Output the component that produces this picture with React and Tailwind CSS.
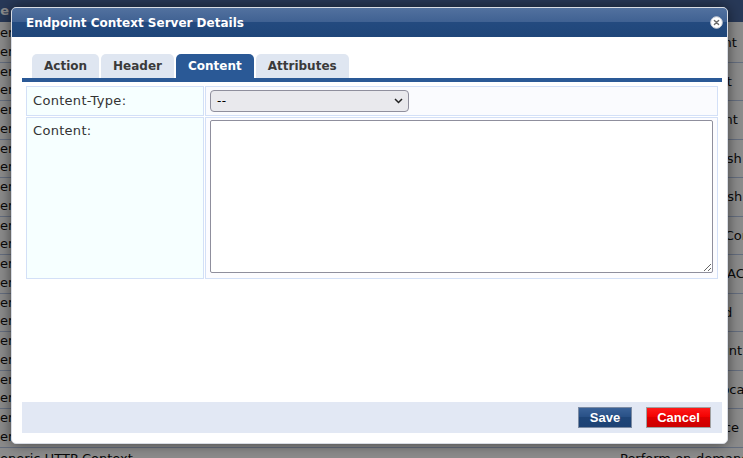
import React from 'react';

const rows = [
  'Disables endpoint',
  'Isolates endpoint',
  'Restores endpoint',
  'Query device hash',
  'Check device hash',
  'Marks endpoint Compliant',
  'Gets endpoint MAC',
  'Endpoint blocked',
  'Retrigger endpoint',
  'Set the device location',
  'Disconnect device',
];

const tabs = ['Action', 'Header', 'Content', 'Attributes'];

const BackgroundPage = () => (
  <div className="absolute inset-0 bg-white text-[13px] text-[#111]">
    <div className="h-[22px] bg-[#4a68a0] flex items-center">
      <span className="-ml-[33px] font-bold text-white">Name</span>
    </div>
    <div className="mt-[2px]">
      {rows.map((r, i) => (
        <div key={i} className="h-[38.5px] flex items-center border-b border-[#b8c8e8]">
          <div className="w-[630px] shrink-0 -ml-[10px] leading-[18.5px]">
            <div>Generic HTTP Context</div>
            <div>Generic HTTP Context Server</div>
          </div>
          <div className="whitespace-nowrap">{r}</div>
        </div>
      ))}
      <div className="h-[38.5px] flex items-start pt-[1px]">
        <div className="w-[630px] shrink-0 -ml-[10px]">Generic HTTP Context</div>
        <div className="whitespace-nowrap">Perform on-demand scan</div>
      </div>
    </div>
    <div className="absolute inset-0 bg-black/45" />
  </div>
);

const CloseIcon = () => (
  <svg width="13" height="13" viewBox="0 0 13 13">
    <circle cx="6.5" cy="6.5" r="5.8" fill="#ffffff" stroke="#c8ccd4" strokeWidth="1" />
    <path d="M4.4 4.4 L8.6 8.6 M8.6 4.4 L4.4 8.6" stroke="#6b6b6b" strokeWidth="1.4" strokeLinecap="round" />
  </svg>
);

export default function App() {
  return (
    <div
      className="relative w-[743px] h-[458px] overflow-hidden"
      style={{ fontFamily: '"DejaVu Sans", Verdana, sans-serif' }}
    >
      <BackgroundPage />

      <div className="absolute left-[11px] top-[7px] w-[717px] h-[437px] bg-white border border-[#d8dce4] rounded-[5px] shadow-[0_0_14px_rgba(0,0,0,0.55)] flex flex-col overflow-hidden">
        <div className="h-[29px] shrink-0 flex items-center justify-between pl-[14px] pr-[4px] bg-[linear-gradient(#52719f,#3f6192_50%,#234a7f_50%,#1f4679)]">
          <span className="text-[12px] font-bold text-white">Endpoint Context Server Details</span>
          <CloseIcon />
        </div>

        <div className="flex-1 flex flex-col pl-[10px] pr-[5px]">
          <div className="mt-[17px] flex gap-[2px] pl-[10px]">
            {tabs.map((t) => (
              <div
                key={t}
                className={
                  t === 'Content'
                    ? 'h-[24px] px-[12px] flex items-center rounded-t-[5px] bg-[#2a5996] text-white text-[12px] font-bold'
                    : 'h-[24px] px-[12px] flex items-center rounded-t-[5px] bg-[#dfe6f1] text-[#3a3a3a] text-[12px] font-bold'
                }
              >
                {t}
              </div>
            ))}
          </div>
          <div className="h-[4px] bg-[#2a5996]" />

          <div className="mt-[4px] px-[4px]">
            <div className="grid grid-cols-[178px_1fr] gap-[1px] text-[13px] tracking-[0.3px] text-[#333]">
              <div className="h-[30px] bg-[#f6ffff] border border-[#d3e0f7] flex items-center pl-[6px]">
                Content-Type:
              </div>
              <div className="h-[30px] bg-[#fafbfe] border border-[#d3e0f7] flex items-center pl-[4px]">
                <div className="relative w-[199px] h-[22px] bg-[#e9e9ed] border border-[#8f8f9d] rounded-[4px] flex items-center pl-[6px] text-black text-[12px]">
                  --
                  <svg className="absolute right-[5px] top-[7px]" width="9" height="6" viewBox="0 0 9 6">
                    <path d="M1 1 L4.5 4.5 L8 1" fill="none" stroke="#222" strokeWidth="1.5" />
                  </svg>
                </div>
              </div>
              <div className="h-[162px] bg-[#f6ffff] border border-[#d3e0f7] pl-[6px] pt-[5px] leading-[16px]">
                Content:
              </div>
              <div className="h-[162px] bg-[#fcfcff] border border-[#d3e0f7] pl-[4px] pt-[2px] pr-[4px]">
                <textarea className="block w-[503px] h-[153px] bg-white border border-[#8f8f9d] rounded-[2px] outline-none resize" />
              </div>
            </div>
          </div>

          <div className="flex-1" />

          <div className="h-[31px] mb-[10px] bg-[#e2e8f4] flex items-center justify-end gap-[14px] pr-[11px]" style={{ fontFamily: '"Liberation Sans", Arial, sans-serif' }}>
            <button className="w-[54px] h-[21px] border border-[#7b8ba3] bg-[linear-gradient(#3a6298,#274f85_50%,#1e4578_50%,#1d4274)] text-white text-[13px] font-bold">
              Save
            </button>
            <button className="w-[65px] h-[21px] border border-[#a0a0a0] bg-[linear-gradient(#ff1a1a,#f20000_50%,#dd0000_50%,#cc0000)] text-white text-[13px] font-bold">
              Cancel
            </button>
          </div>
        </div>
      </div>
    </div>
  );
}
